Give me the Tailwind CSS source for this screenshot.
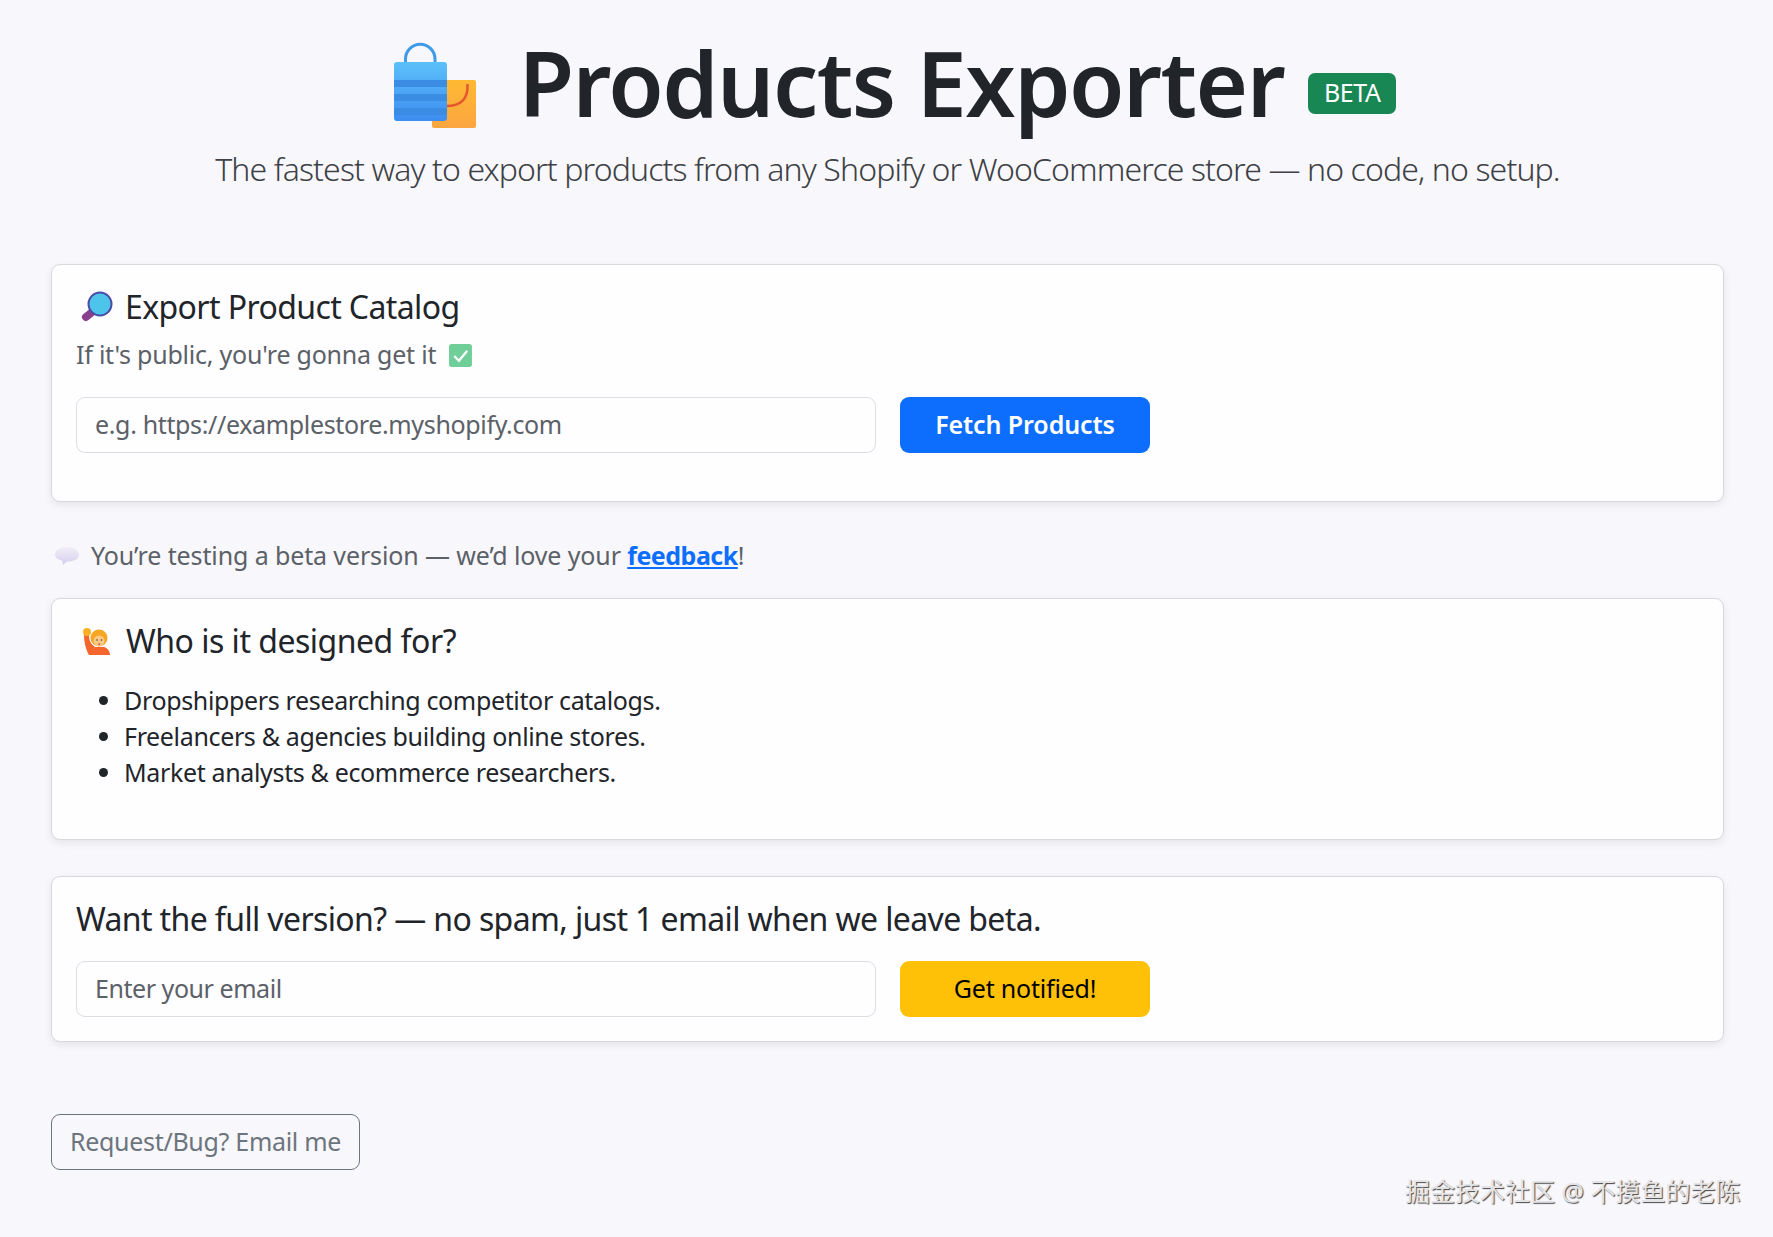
<!DOCTYPE html>
<html lang="en">
<head>
    <meta charset="UTF-8">
    <meta name="viewport" content="width=device-width, initial-scale=1.0">
    <title>Products Exporter</title>
    <script src="https://cdn.jsdelivr.net/npm/@tailwindcss/browser@4"></script>
</head>
<body class="relative bg-[#f8f7fc] h-[1237px] overflow-hidden font-['Noto_Sans','Noto_Sans_CJK_SC',sans-serif] text-[#212529]">
    <div class="pl-[51px] pr-[49px] pt-[27px]">

        <!-- Header -->
        <header class="text-center h-[237px]">
            <div class="flex items-center justify-center h-[110px]">
                <svg class="w-[90px] h-[90px] ml-[11px] mt-[6px]" viewBox="0 0 90 90">
                    <defs>
                        <linearGradient id="bagBlue" x1="0" y1="0" x2="0" y2="1">
                            <stop offset="0" stop-color="#5cc0fa"/>
                            <stop offset="1" stop-color="#3d8df0"/>
                        </linearGradient>
                        <linearGradient id="bagOrange" x1="0" y1="0" x2="0" y2="1">
                            <stop offset="0" stop-color="#ffb933"/>
                            <stop offset="1" stop-color="#fba53f"/>
                        </linearGradient>
                    </defs>
                    <rect x="42" y="40" width="44" height="48" rx="2" fill="url(#bagOrange)"/>
                    <path d="M77.500 45 C78 58 72 66 56 66" fill="none" stroke="#e4572e" stroke-width="2.500" stroke-linecap="round"/>
                    <path d="M15.500 30 V19 A14.750 14.750 0 0 1 45 19 V30" fill="none" stroke="#3d9be9" stroke-width="3" stroke-linecap="round"/>
                    <rect x="4" y="22" width="53" height="59" rx="3" fill="url(#bagBlue)"/>
                    <rect x="4" y="40" width="53" height="7" fill="#3b8de3"/>
                    <rect x="4" y="54" width="53" height="7" fill="#3b8de3"/>
                    <rect x="4" y="68" width="53" height="7" fill="#3b8de3"/>
                </svg>
                <h1 class="ml-[39px] text-[90px] leading-[110px] font-semibold tracking-[-1.5px] text-[#212529]">Products Exporter</h1>
                <span class="ml-[24px] mt-[22px] flex items-center justify-center w-[88px] h-[41px] rounded-[7px] bg-[#198754] text-white text-[25px] tracking-[-0.4px]">BETA</span>
            </div>
            <p class="mt-[8px] text-[32px] leading-[48px] font-light tracking-[-0.88px] text-[#3d4145]">The fastest way to export products from any Shopify or WooCommerce store — no code, no setup.</p>
        </header>

        <!-- Export card -->
        <section class="h-[238px] bg-[#fefdff] border border-[#d9d8dc] rounded-[9px] shadow-[0_3px_8px_rgba(0,0,0,0.08)] px-[24px] pt-[19px]">
            <h2 class="flex items-center h-[46px] text-[32px] tracking-[-0.6px] leading-[46px]">
                <svg class="w-[34px] h-[34px] mr-[11px] ml-[4px]" viewBox="0 0 34 34">
                    <path d="M6 27 L11 23" stroke="#8a3f8f" stroke-width="8" stroke-linecap="round"/>
                    <circle cx="20" cy="14" r="11.500" fill="#4dc4ea" stroke="#4a4fa5" stroke-width="2"/>
                </svg>
                Export Product Catalog
            </h2>
            <p class="flex items-center h-[36px] mt-[7px] text-[25px] tracking-[-0.23px] text-[#5b6167]">
                If it's public, you're gonna get it
                <svg class="w-[25px] h-[25px] ml-[12px]" viewBox="0 0 24 24">
                    <rect x="1" y="1" width="22" height="22" rx="2.500" fill="#70cf98"/>
                    <path d="M6 12.500 L10.500 17 L18.500 7.500" fill="none" stroke="#fff" stroke-width="2.200"/>
                </svg>
            </p>
            <div class="flex gap-[24px] mt-[24px]">
                <input class="w-[800px] h-[56px] px-[18px] pb-[2px] bg-[#fefdff] border border-[#dedde1] rounded-[9px] text-[25px] tracking-[-0.35px] placeholder:text-[#5b6167] outline-none" placeholder="e.g. https://examplestore.myshopify.com">
                <button class="w-[250px] h-[56px] rounded-[9px] bg-[#0d6efd] text-white text-[25px] font-semibold tracking-[-0.1px]">Fetch Products</button>
            </div>
        </section>

        <!-- Beta notice -->
        <p class="flex items-center h-[36px] mt-[36px] text-[25px] tracking-[-0.12px] text-[#5b6167]">
            <svg class="w-[26px] h-[22px] ml-[3px] mr-[11px]" viewBox="0 0 26 22">
                <defs>
                    <linearGradient id="bubble" x1="0" y1="0" x2="0" y2="1">
                        <stop offset="0" stop-color="#f1eef8"/>
                        <stop offset="1" stop-color="#d5cfed"/>
                    </linearGradient>
                </defs>
                <path d="M13 2 C20 2 25 5.500 25 9.500 C25 14 20 16.500 13 16.500 L9 20 L8 15.500 C3.500 14.500 1 12.500 1 9.500 C1 5.500 6 2 13 2 Z" fill="url(#bubble)"/>
            </svg>
            <span>You’re testing a beta version — we’d love your <a href="#" class="font-bold tracking-[-0.5px] text-[#0d6efd] underline">feedback</a>!</span>
        </p>

        <!-- Audience card -->
        <section class="h-[242px] mt-[24px] bg-[#fefdff] border border-[#d9d8dc] rounded-[9px] shadow-[0_3px_8px_rgba(0,0,0,0.08)] px-[24px] pt-[19px]">
            <h2 class="flex items-center h-[46px] text-[32px] tracking-[-0.5px] leading-[46px]">
                <svg class="w-[34px] h-[34px] mr-[12px] ml-[4px]" viewBox="0 0 34 34">
                    <path d="M4 11 L9 11 C9 17 11 20 15 23 L24 23 C28 24 30 28 30 31 L9 31 C6 26 4 18 4 11 Z" fill="#f4662c"/>
                    <circle cx="7" cy="8" r="4" fill="#fbb024"/>
                    <circle cx="19" cy="14" r="8.500" fill="#f5a623"/>
                    <circle cx="19" cy="17" r="5.500" fill="#fcc987"/>
                    <circle cx="17" cy="16" r="0.800" fill="#5a3a2a"/>
                    <circle cx="21.500" cy="16" r="0.800" fill="#5a3a2a"/>
                    <rect x="18.300" y="19.500" width="1.800" height="1.300" fill="#c0392b"/>
                </svg>
                Who is it designed for?
            </h2>
            <ul class="mt-[18px] ml-[24px] pl-[24px] list-disc text-[25px] leading-[36px] tracking-[-0.35px]">
                <li>Dropshippers researching competitor catalogs.</li>
                <li>Freelancers &amp; agencies building online stores.</li>
                <li>Market analysts &amp; ecommerce researchers.</li>
            </ul>
        </section>

        <!-- Notify card -->
        <section class="h-[166px] mt-[36px] bg-[#fefdff] border border-[#d9d8dc] rounded-[9px] shadow-[0_3px_8px_rgba(0,0,0,0.08)] px-[24px] pt-[19px]">
            <h2 class="h-[46px] text-[32px] tracking-[-0.62px] leading-[46px]">Want the full version? — no spam, just 1 email when we leave beta.</h2>
            <div class="flex gap-[24px] mt-[19px]">
                <input class="w-[800px] h-[56px] px-[18px] pb-[2px] bg-[#fefdff] border border-[#dedde1] rounded-[9px] text-[25px] tracking-[-0.45px] placeholder:text-[#5b6167] outline-none" placeholder="Enter your email">
                <button class="w-[250px] h-[56px] rounded-[9px] bg-[#ffc107] text-black text-[25px] tracking-[-0.2px]">Get notified!</button>
            </div>
        </section>

        <button class="block w-[309px] h-[56px] mt-[72px] border border-[#6c757d] rounded-[9px] text-[25px] tracking-[-0.3px] text-[#6c757d]">Request/Bug? Email me</button>
    </div>

    <!-- Watermark -->
    <div class="absolute left-[1405px] top-[1173px] text-[25px] leading-[36px] text-[#e4e4e6] whitespace-nowrap [text-shadow:1px_1px_1px_#444]">掘金技术社区 @ 不摸鱼的老陈</div>
</body>
</html>
